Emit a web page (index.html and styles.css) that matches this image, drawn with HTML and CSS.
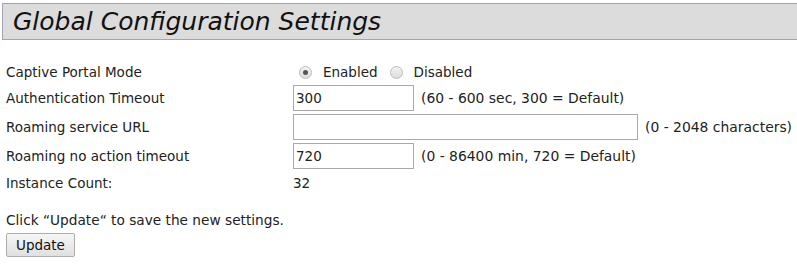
FILE: index.html
```html
<!DOCTYPE html>
<html>
<head>
<meta charset="utf-8">
<link rel="stylesheet" href="styles.css">
</head>
<body>
<div class="header"><h1 class="title">Global Configuration Settings</h1></div>
<div class="form">
  <div class="label lbl-first">Captive Portal Mode</div>
  <div class="value val-first">
    <span class="radio checked"></span><span class="rtext">Enabled</span>
    <span class="radio"></span><span class="rtext">Disabled</span>
  </div>
  <div class="label">Authentication Timeout</div>
  <div class="value"><span class="input short">300</span><span class="hint">(60 - 600 sec, 300 = Default)</span></div>
  <div class="label">Roaming service URL</div>
  <div class="value"><span class="input long"></span><span class="hint">(0 - 2048 characters)</span></div>
  <div class="label">Roaming no action timeout</div>
  <div class="value"><span class="input short">720</span><span class="hint">(0 - 86400 min, 720 = Default)</span></div>
  <div class="label lbl-last">Instance Count:</div>
  <div class="value val-last">32</div>
</div>
<p class="note">Click “Update“ to save the new settings.</p>
<button class="btn">Update</button>
</body>
</html>
```
FILE: styles.css
```css
body {
  margin: 0;
  font-family: "DejaVu Sans", Verdana, sans-serif;
  font-size: 13.5px;
  color: #222;
  background: #fff;
}
.header {
  margin: 3px 0 0 2px;
  height: 35px;
  background: #dcdcdc;
  border-top: 1px solid #a3a3b5;
  border-bottom: 1px solid #a3a3b5;
  border-left: 1px solid #a3a3b5;
  display: flex;
  align-items: center;
}
.title {
  margin: 0 0 0 10px;
  font-size: 25px;
  font-weight: normal;
  font-style: italic;
  color: #111;
}
.form {
  display: grid;
  grid-template-columns: 287px auto;
  margin: 22px 0 0 6px;
  row-gap: 3px;
}
.label, .value {
  display: flex;
  align-items: center;
  min-height: 26px;
  white-space: nowrap;
}
.lbl-first, .val-first { min-height: 20px; }
.lbl-last, .val-last { min-height: 22px; }
.radio {
  width: 13px;
  height: 13px;
  border-radius: 50%;
  border: 1px solid #bbb;
  background: linear-gradient(#f4f4f4, #dcdcdc);
  box-sizing: border-box;
  margin: 0 11px 0 6px;
  position: relative;
}
.radio.checked::after {
  content: "";
  position: absolute;
  left: 3px; top: 3px;
  width: 5px; height: 5px;
  border-radius: 50%;
  background: #555;
}
.rtext { margin-right: 6px; }
.input {
  box-sizing: border-box;
  height: 26px;
  border: 1px solid #a9a9a9;
  padding: 0 2px;
  display: flex;
  align-items: center;
}
.short { width: 121px; }
.long { width: 345px; }
.hint { margin-left: 7px; font-size: 13.9px; }
.note { margin: 18px 0 5px 6px; font-size: 13.7px; }
.btn {
  margin-left: 6px;
  font-family: inherit;
  font-size: 13.5px;
  height: 24px;
  padding: 0 9px;
  border: 1px solid #adadad;
  background: linear-gradient(#f6f6f6, #e0e0e0);
  border-radius: 2px;
  color: #111;
}
```
